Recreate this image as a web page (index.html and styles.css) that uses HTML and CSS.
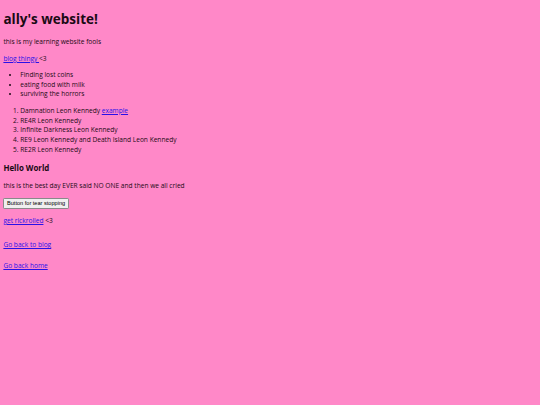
FILE: index.html
```html
<!DOCTYPE html>
<html>
<head>
<meta charset="utf-8">
<title>ally's website!</title>
<link rel="stylesheet" href="styles.css">
</head>
<body>
<h1 class="title">ally's website!</h1>
<p class="intro">this is my learning website fools</p>
<p class="blog"><a href="#">blog thingy </a>&lt;3</p>
<ul class="bullets">
  <li>Finding lost coins</li>
  <li>eating food with milk</li>
  <li>surviving the horrors</li>
</ul>
<ol class="numbers">
  <li>Damnation Leon Kennedy <a href="#">example</a></li>
  <li>RE4R Leon Kennedy</li>
  <li>Infinite Darkness Leon Kennedy</li>
  <li>RE9 Leon Kennedy and Death Island Leon Kennedy</li>
  <li>RE2R Leon Kennedy</li>
</ol>
<h3 class="hello">Hello World</h3>
<p class="best">this is the best day EVER said NO ONE and then we all cried</p>
<button class="tear" type="button">Button for tear stopping</button>
<p class="rick"><a href="#">get rickrolled</a> &lt;3</p>
<p class="back-blog"><a href="#">Go back to blog</a></p>
<p class="back-home"><a href="#">Go back home</a></p>
</body>
</html>
```
FILE: styles.css
```css
html {
  background: #ff88c8;
}
body {
  margin: 0;
  padding: 0 3.4px;
  font-family: "Open Sans", "DejaVu Sans", sans-serif;
  font-size: 6.6px;
  line-height: 9.7px;
  color: #1a0a14;
}
a {
  color: #2a10e8;
  text-decoration: underline;
}
p, ul, ol, h1, h3 {
  margin: 0;
}
.title {
  font-size: 13.5px;
  line-height: 18.8px;
  font-weight: 700;
  padding-top: 10.1px;
}
.intro { margin-top: 8.25px; }
.blog { margin-top: 7px; }
.bullets {
  margin-top: 6.3px;
  padding-left: 16.9px;
}
.numbers {
  margin-top: 6.9px;
  padding-left: 16.9px;
}
.hello {
  margin-top: 8.45px;
  font-size: 7.9px;
  line-height: 11px;
  font-weight: 700;
}
.best { margin-top: 7.65px; }
.tear {
  display: block;
  margin-top: 6.6px;
  font-family: "Liberation Sans", Arial, sans-serif;
  font-size: 5.6px;
  line-height: 7px;
  padding: 0.9px 2.6px;
  background: #efefef;
  border: 0.6px solid #8a8a8a;
  border-radius: 1.2px;
  color: #000;
}
.rick { margin-top: 7.2px; }
.back-blog { margin-top: 15px; }
.back-home { margin-top: 10.6px; }
```
